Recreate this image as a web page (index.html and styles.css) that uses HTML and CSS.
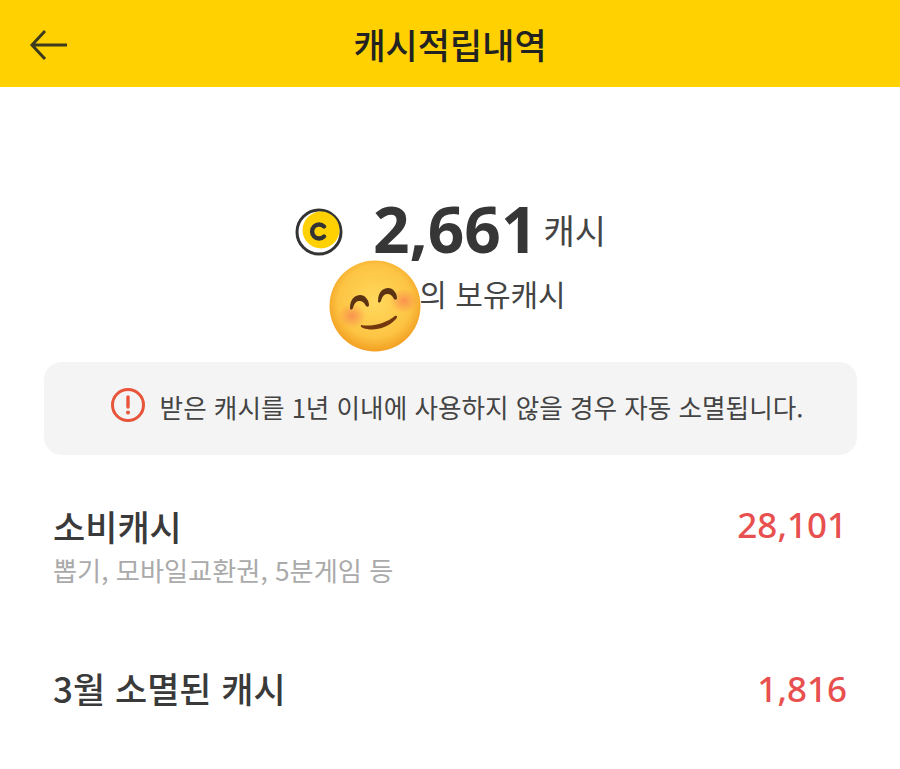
FILE: index.html
```html
<!DOCTYPE html>
<html lang="ko">
<head>
    <meta charset="UTF-8">
    <meta name="viewport" content="width=device-width, initial-scale=1.0">
    <title>캐시적립내역</title>
    <link rel="stylesheet" href="styles.css">
</head>
<body>
    <div class="header">
        <svg class="back" width="40" height="32" viewBox="0 0 40 32">
            <path d="M38 16H4M16 2L3 16L16 30" fill="none" stroke="#3d3a1e" stroke-width="3"/>
        </svg>
        <h1>캐시적립내역</h1>
    </div>

    <div class="summary">
        <div class="balance">
            <svg class="coin" width="48" height="48" viewBox="0 0 48 48">
                <circle cx="24" cy="24" r="22" fill="#fff" stroke="#333" stroke-width="3"/>
                <circle cx="26" cy="22" r="18.5" fill="#ffd100"/>
                <path d="M29 18.5a7 7 0 1 0 0 10" fill="none" stroke="#333" stroke-width="4.4" stroke-linecap="round"/>
            </svg>
            <span class="amount">2,661</span>
            <span class="unit">캐시</span>
        </div>
        <div class="owner">
            <span>의 보유캐시</span>
            <svg class="emoji" width="92" height="92" viewBox="0 0 92 92">
                <defs>
                    <radialGradient id="face" cx="50%" cy="45%" r="55%">
                        <stop offset="0" stop-color="#ffd95e"/>
                        <stop offset="0.72" stop-color="#fdc443"/>
                        <stop offset="1" stop-color="#f29f22"/>
                    </radialGradient>
                    <radialGradient id="blush">
                        <stop offset="0" stop-color="#f98650" stop-opacity="0.8"/>
                        <stop offset="1" stop-color="#f98650" stop-opacity="0"/>
                    </radialGradient>
                    <path id="eye" d="M21 48C21 38 27 35 31 35C36 35 40 40 40 45C40 47 38 47 37 46C35 42 33 41 30 41C27 41 25 44 24 48C23 50 21 50 21 48Z" fill="#5b3212"/>
                </defs>
                <circle cx="46" cy="46" r="45.5" fill="url(#face)"/>
                <ellipse cx="23" cy="56" rx="14" ry="12" fill="url(#blush)"/>
                <ellipse cx="75" cy="41" rx="14" ry="12" fill="url(#blush)"/>
                <use href="#eye"/>
                <use href="#eye" x="28" y="-7"/>
                <path d="M32 65C42 67 56 64 66 56C68 55 69 57 67 59C60 67 47 71 38 69C34 68.5 31 67 32 65Z" fill="#74380f"/>
            </svg>
        </div>
    </div>

    <div class="notice">
        <svg class="notice-icon" width="36" height="36" viewBox="0 0 36 36">
            <circle cx="18" cy="18" r="15.5" fill="none" stroke="#e8553a" stroke-width="3"/>
            <path d="M18 10V20" stroke="#e8553a" stroke-width="3.4" stroke-linecap="round"/>
            <circle cx="18" cy="25.5" r="2" fill="#e8553a"/>
        </svg>
        <span class="notice-text">받은 캐시를 1년 이내에 사용하지 않을 경우 자동 소멸됩니다.</span>
    </div>

    <div class="row row-first">
        <div>
            <div class="row-title">소비캐시</div>
            <div class="row-sub">뽑기, 모바일교환권, 5분게임 등</div>
        </div>
        <div class="row-value">28,101</div>
    </div>
    <div class="row">
        <div class="row-title">3월 소멸된 캐시</div>
        <div class="row-value">1,816</div>
    </div>
</body>
</html>
```
FILE: styles.css
```css
html, body {
    height: 100%;
}

body {
    margin: 0;
    padding: 0;
    overflow: hidden;
    background-color: #fff;
    color: #333;
    font-family: 'Noto Sans CJK KR', 'Noto Sans', sans-serif;
}

.header {
    position: relative;
    height: 87px;
    display: flex;
    align-items: center;
    justify-content: center;
    background-color: #ffd100;
}

.header h1 {
    margin: 0;
    font-size: 35px;
    font-weight: 500;
    color: #222;
}

.back {
    position: absolute;
    left: 29px;
    top: 29px;
}

.summary {
    padding-top: 104px;
    height: 171px;
    display: flex;
    flex-direction: column;
    align-items: center;
}

.balance {
    display: flex;
    align-items: center;
    height: 80px;
    margin-top: -3px;
    padding-left: 1px;
}

.coin {
    margin-right: 30px;
    margin-top: 8px;
}

.amount {
    font-size: 64px;
    font-weight: 700;
    color: #363636;
    font-family: 'Open Sans', sans-serif;
    margin-right: 6px;
}

.unit {
    font-size: 34px;
    color: #444;
    margin-top: 2px;
}

.owner {
    position: relative;
    margin-top: 3px;
    padding-left: 85px;
    font-size: 30px;
    color: #444;
}

.emoji {
    position: absolute;
    left: -5px;
    top: -11px;
}

.notice {
    margin: 0 43px 0 44px;
    height: 93px;
    padding-left: 12px;
    display: flex;
    align-items: center;
    justify-content: center;
    gap: 14px;
    background-color: #f4f4f4;
    border-radius: 18px;
    font-size: 25.6px;
    color: #444;
}

.notice-icon {
    margin-bottom: 8px;
}

.notice-text {
    margin-bottom: 4px;
}

.row {
    display: flex;
    justify-content: space-between;
    align-items: center;
    padding: 0 53px;
    margin-top: 73px;
}

.row-first {
    align-items: flex-start;
    margin-top: 45px;
}

.row-title {
    font-size: 35px;
    font-weight: 500;
    color: #3a3a3a;
}

.row-sub {
    font-size: 26.2px;
    color: #aaa;
}

.row-value {
    font-size: 35px;
    font-weight: 500;
    color: #e8504f;
    font-family: 'Noto Sans', sans-serif;
    margin-top: 1px;
}
```
